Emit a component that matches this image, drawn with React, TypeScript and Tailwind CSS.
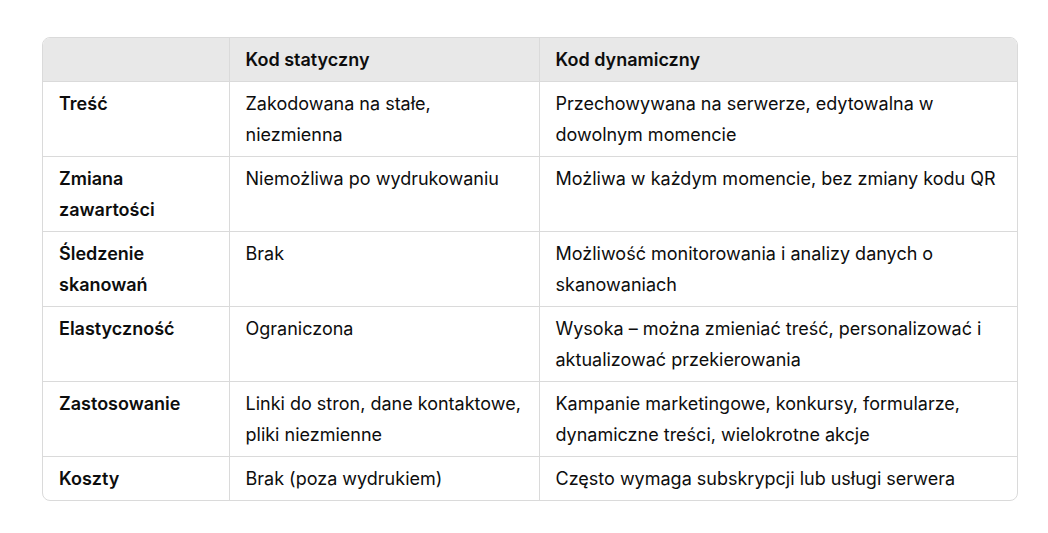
const rows: [string, string, string][] = [
  ["Treść", "Zakodowana na stałe, niezmienna", "Przechowywana na serwerze, edytowalna w dowolnym momencie"],
  ["Zmiana zawartości", "Niemożliwa po wydrukowaniu", "Możliwa w każdym momencie, bez zmiany kodu QR"],
  ["Śledzenie skanowań", "Brak", "Możliwość monitorowania i analizy danych o skanowaniach"],
  ["Elastyczność", "Ograniczona", "Wysoka – można zmieniać treść, personalizować i aktualizować przekierowania"],
  ["Zastosowanie", "Linki do stron, dane kontaktowe, pliki niezmienne", "Kampanie marketingowe, konkursy, formularze, dynamiczne treści, wielokrotne akcje"],
  ["Koszty", "Brak (poza wydrukiem)", "Często wymaga subskrypcji lub usługi serwera"],
]

export default function App() {
  return (
    <div className="min-h-screen bg-white pl-[42px] pt-[37px] font-['Inter',sans-serif] text-[18px] leading-[31px] text-[#0d0d0d]">
      <div className="w-[976px] overflow-hidden rounded-lg border border-[#dadada]">
        <table className="w-full table-fixed border-collapse text-left">
          <colgroup>
            <col className="w-[186px]" />
            <col className="w-[310px]" />
            <col />
          </colgroup>
          <thead>
            <tr className="bg-[#e8e8e8]">
              <th className="border-b border-[#dadada] px-4 py-[6px] font-semibold"></th>
              <th className="border-b border-l border-[#dadada] px-4 py-[6px] font-semibold">Kod statyczny</th>
              <th className="border-b border-l border-[#dadada] px-4 py-[6px] font-semibold">Kod dynamiczny</th>
            </tr>
          </thead>
          <tbody>
            {rows.map((r, i) => (
              <tr key={i} className={i < rows.length - 1 ? "border-b border-[#dadada]" : ""}>
                <td className="px-4 py-[6px] align-top font-semibold">{r[0]}</td>
                <td className="border-l border-[#dadada] px-4 py-[6px] align-top">{r[1]}</td>
                <td className="border-l border-[#dadada] px-4 py-[6px] align-top">{r[2]}</td>
              </tr>
            ))}
          </tbody>
        </table>
      </div>
    </div>
  )
}
